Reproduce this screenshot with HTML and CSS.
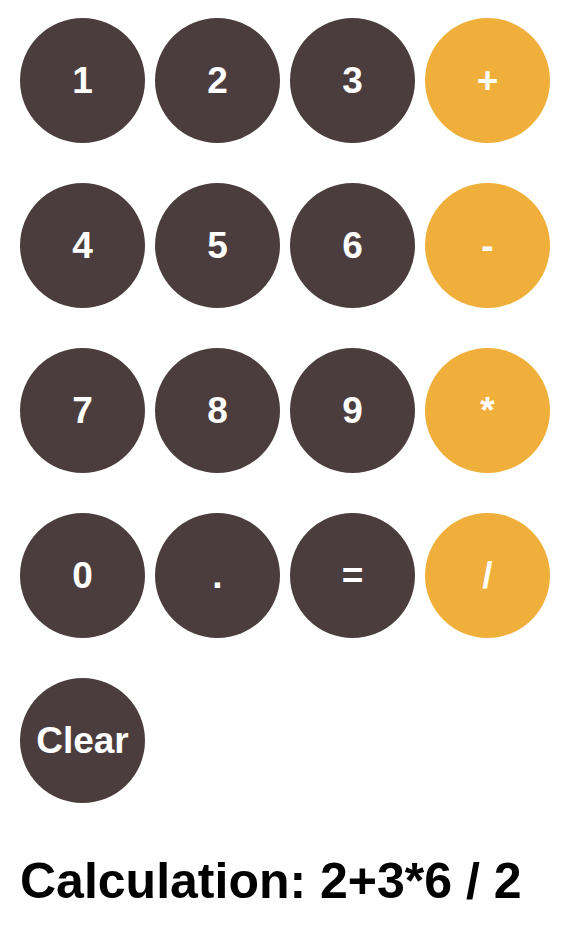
FILE: index.html
```html
<!DOCTYPE html>
<html>
<head>
<meta charset="utf-8">
<link rel="stylesheet" href="styles.css">
</head>
<body>
<div class="calc">
  <div class="pad">
    <button class="key">1</button>
    <button class="key">2</button>
    <button class="key">3</button>
    <button class="key op">+</button>
    <button class="key">4</button>
    <button class="key">5</button>
    <button class="key">6</button>
    <button class="key op">-</button>
    <button class="key">7</button>
    <button class="key">8</button>
    <button class="key">9</button>
    <button class="key op">*</button>
    <button class="key">0</button>
    <button class="key">.</button>
    <button class="key">=</button>
    <button class="key op">/</button>
    <button class="key">Clear</button>
  </div>
  <h1 class="result">Calculation: 2+3*6 / 2</h1>
</div>
</body>
</html>
```
FILE: styles.css
```css
html, body {
  margin: 0;
  padding: 0;
  background: #ffffff;
}
.calc {
  padding: 18px 20px 0 20px;
  font-family: "Liberation Sans", Arial, sans-serif;
}
.pad {
  display: grid;
  grid-template-columns: repeat(4, 125px);
  column-gap: 10px;
  row-gap: 40px;
}
.key {
  width: 125px;
  height: 125px;
  border-radius: 50%;
  border: none;
  padding: 0;
  margin: 0;
  background: #4b3d3e;
  color: #ffffff;
  font-family: "Liberation Sans", Arial, sans-serif;
  font-weight: bold;
  font-size: 37px;
  display: flex;
  align-items: center;
  justify-content: center;
}
.key.op {
  background: #f0af3b;
}
.result {
  margin: 49px 0 0 0;
  font-size: 50px;
  font-weight: bold;
  color: #000000;
  line-height: normal;
}
```
